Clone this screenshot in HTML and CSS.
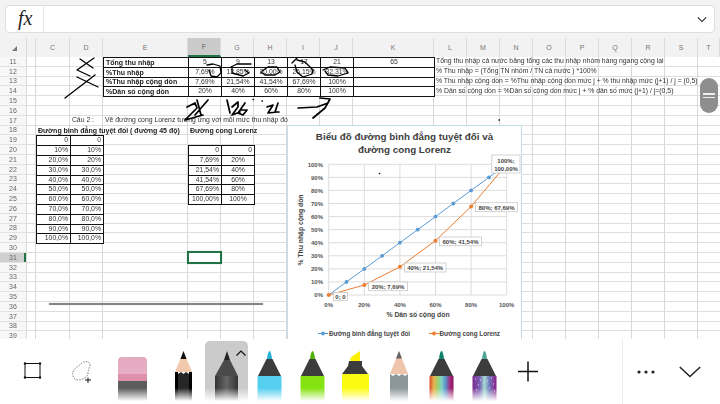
FILE: index.html
```html
<!DOCTYPE html>
<html lang="vi">
<head>
<meta charset="utf-8">
<title>Excel ink</title>
<link rel="stylesheet" href="styles.css">
</head>
<body>
<div class="app">
  <header class="formula">
    <div class="formula-box">
      <span class="fx">fx</span>
      <svg class="fchev" viewBox="0 0 12 8"><path d="M1 1.5 6 6.5 11 1.5"/></svg>
    </div>
  </header>

  <div class="heads">
    <div class="head corner"><svg viewBox="0 0 5 5" class="tri"><path d="M5 0V5H0Z"/></svg></div>
    <div class="head"></div>
    <div class="head">C</div><div class="head">D</div><div class="head">E</div>
    <div class="head sel">F</div><div class="head">G</div><div class="head">H</div><div class="head">I</div><div class="head">J</div>
    <div class="head">K</div><div class="head">L</div><div class="head">M</div><div class="head">N</div><div class="head">O</div>
    <div class="head">P</div><div class="head">Q</div><div class="head">R</div><div class="head">S</div><div class="head">T</div>
  </div>

  <main class="sheet">
    <div class="grid">
      <div class="vl cb"></div><div class="vl cc"></div><div class="vl cd"></div><div class="vl ce"></div>
      <div class="vl cf"></div><div class="vl cg"></div><div class="vl ch"></div><div class="vl ci"></div><div class="vl cj"></div>
      <div class="vl ck"></div><div class="vl cl"></div><div class="vl cm"></div><div class="vl cn"></div><div class="vl co"></div>
      <div class="vl cp"></div><div class="vl cq"></div><div class="vl cr"></div><div class="vl cs"></div>

      <div class="rn">11</div><div class="rn">12</div><div class="rn">13</div><div class="rn">14</div><div class="rn">15</div>
      <div class="rn">16</div><div class="rn">17</div><div class="rn">18</div><div class="rn">19</div><div class="rn">20</div>
      <div class="rn">21</div><div class="rn">22</div><div class="rn">23</div><div class="rn">24</div><div class="rn">25</div>
      <div class="rn">26</div><div class="rn">27</div><div class="rn">28</div><div class="rn">29</div><div class="rn">30</div>
      <div class="rn on">31</div><div class="rn">32</div><div class="rn">33</div><div class="rn">34</div><div class="rn">35</div>
      <div class="rn">36</div><div class="rn">37</div><div class="rn">38</div><div class="rn">39</div>

      <div class="t bold ce r11">Tổng thu nhập</div><div class="t mid cf r11">5</div><div class="t mid cg r11">9</div><div class="t mid ch r11">13</div><div class="t mid ci r11">17</div><div class="t mid cj r11">21</div><div class="t mid ck r11">65</div>
      <div class="t bold ce r12">%Thu nhập</div><div class="t mid cf r12">7,69%</div><div class="t mid cg r12">13,85%</div><div class="t mid ch r12">20,00%</div><div class="t mid ci r12">26,15%</div><div class="t mid cj r12">32,31%</div><div class="t ck r12"></div>
      <div class="t bold ce r13">%Thu nhập cộng dồn</div><div class="t mid cf r13">7,69%</div><div class="t mid cg r13">21,54%</div><div class="t mid ch r13">41,54%</div><div class="t mid ci r13">67,69%</div><div class="t mid cj r13">100%</div><div class="t ck r13"></div>
      <div class="t bold ce r14">%Dân số cộng dồn</div><div class="t mid cf r14">20%</div><div class="t mid cg r14">40%</div><div class="t mid ch r14">60%</div><div class="t mid ci r14">80%</div><div class="t mid cj r14">100%</div><div class="t ck r14"></div>

      <div class="n cl r11">Tổng thu nhập cả nước bằng tổng các thu nhập nhóm hàng ngang cộng lại</div>
      <div class="n cl r12">% Thu nhập  = (Tổng TN nhóm / TN cả nước ) *100%</div>
      <div class="n cl r13">% Thu nhập cộng dồn = %Thu nhập cộng dồn mức j + % thu nhập mức (j+1) / j = (0,5)</div>
      <div class="n cl r14">% Dân số cộng dồn = %Dân số cộng dồn mức j + % dân số mức (j+1) / j=(0,5)</div>

      <div class="n cd r17 rt">Câu 2 :</div>
      <div class="n ce r17">Vẽ đường cong Lorenz tương ứng với mỗi mức thu nhập đó</div>
      <div class="n bold cc r18">Đường bình đẳng tuyệt đối ( đường 45 độ)</div>
      <div class="n bold cf r18">Đường cong Lorenz</div>

      <div class="t end cc r19">0</div><div class="t end cd r19">0</div>
      <div class="t end cc r20">10%</div><div class="t end cd r20">10%</div>
      <div class="t end cc r21">20,0%</div><div class="t end cd r21">20%</div>
      <div class="t end cc r22">30,0%</div><div class="t end cd r22">30,0%</div>
      <div class="t end cc r23">40,0%</div><div class="t end cd r23">40,0%</div>
      <div class="t end cc r24">50,0%</div><div class="t end cd r24">50,0%</div>
      <div class="t end cc r25">60,0%</div><div class="t end cd r25">60,0%</div>
      <div class="t end cc r26">70,0%</div><div class="t end cd r26">70,0%</div>
      <div class="t end cc r27">80,0%</div><div class="t end cd r27">80,0%</div>
      <div class="t end cc r28">90,0%</div><div class="t end cd r28">90,0%</div>
      <div class="t end cc r29">100,0%</div><div class="t end cd r29">100,0%</div>

      <div class="t end cf r20">0</div><div class="t end cg r20">0</div>
      <div class="t end cf r21">7,69%</div><div class="t mid cg r21">20%</div>
      <div class="t end cf r22">21,54%</div><div class="t mid cg r22">40%</div>
      <div class="t end cf r23">41,54%</div><div class="t mid cg r23">60%</div>
      <div class="t end cf r24">67,69%</div><div class="t mid cg r24">80%</div>
      <div class="t end cf r25">100,00%</div><div class="t mid cg r25">100%</div>

      <div class="cursor cf r31"></div>
    </div>

    <svg class="chart" viewBox="287 125 235 214">
      <rect x="287.5" y="125.5" width="234" height="230" fill="#fff" stroke="#c5dcea"/>
      <g class="ch-title">
        <text x="404.500" y="140.300">Biểu đồ đường bình đẳng tuyệt đối và</text>
        <text x="404.500" y="153.300">đường cong Lorenz</text>
      </g>
      <path class="ch-grid" d="M328.7 164.3H506.7M328.7 177.4H506.7M328.7 190.4H506.7M328.7 203.5H506.7M328.7 216.6H506.7M328.7 229.7H506.7M328.7 242.7H506.7M328.7 255.8H506.7M328.7 268.9H506.7M328.7 281.9H506.7M328.7 295H506.7M328.7 164.3V295M364.3 164.3V295M399.9 164.3V295M435.5 164.3V295M471.1 164.3V295M506.7 164.3V295"/>
      <g class="ch-y">
        <text x="323" y="166.500">100%</text><text x="323" y="179.500">90%</text><text x="323" y="192.700">80%</text><text x="323" y="205.700">70%</text><text x="323" y="218.800">60%</text><text x="323" y="231.900">50%</text><text x="323" y="244.900">40%</text><text x="323" y="258">30%</text><text x="323" y="271.100">20%</text><text x="323" y="284.100">10%</text><text x="323" y="297.200">0%</text>
      </g>
      <g class="ch-x">
        <text x="328.7" y="306.500">0%</text><text x="364.3" y="306.500">20%</text><text x="399.9" y="306.500">40%</text><text x="435.5" y="306.500">60%</text><text x="471.1" y="306.500">80%</text><text x="506.7" y="306.500">100%</text>
      </g>
      <text class="ch-ax" x="418" y="316.500">% Dân số cộng dồn</text>
      <text class="ch-ax" transform="translate(303 230) rotate(-90)">% Thu nhập cộng dồn</text>

      <polyline class="ln blue" points="328.7,295 346.5,281.9 364.3,268.9 382.1,255.8 399.9,242.7 417.7,229.7 435.5,216.6 453.3,203.5 471.1,190.4 488.9,177.4 506.7,164.3"/>
      <g class="pt-b">
        <circle cx="346.5" cy="281.9" r="1.9"/><circle cx="364.3" cy="268.9" r="1.9"/><circle cx="382.1" cy="255.8" r="1.9"/><circle cx="399.9" cy="242.7" r="1.9"/><circle cx="417.7" cy="229.7" r="1.9"/><circle cx="435.5" cy="216.6" r="1.9"/><circle cx="453.3" cy="203.5" r="1.9"/><circle cx="471.1" cy="190.4" r="1.9"/><circle cx="488.9" cy="177.4" r="1.9"/>
      </g>
      <polyline class="ln org" points="328.7,295 364.3,285 399.9,266.8 435.5,240.7 471.1,206.5 506.7,164.3"/>
      <g class="pt-o">
        <circle cx="328.7" cy="295" r="2"/><circle cx="364.3" cy="285" r="2"/><circle cx="399.9" cy="266.8" r="2"/><circle cx="435.5" cy="240.7" r="2"/><circle cx="471.1" cy="206.5" r="2"/>
      </g>

      <g class="lbox">
        <rect x="333.5" y="292.5" width="14" height="8"/><rect x="368.5" y="282" width="39" height="8.7"/><rect x="404.5" y="263" width="41.5" height="9"/><rect x="439.5" y="237" width="42" height="8.7"/><rect x="475.5" y="202.7" width="42" height="9"/><rect x="491.8" y="155" width="28.2" height="18"/>
      </g>
      <g class="ltxt">
        <text x="340.5" y="299">0; 0</text><text x="388" y="288.8">20%; 7,69%</text><text x="425.2" y="270">40%; 21,54%</text><text x="460.5" y="243.8">60%; 41,54%</text><text x="496.5" y="209.7">80%; 67,69%</text><text x="506" y="163">100%;</text><text x="506" y="171">100,00%</text>
      </g>

      <circle cx="379.5" cy="173.5" r=".8" fill="#000"/>

      <path class="ln blue" d="M318 333.5H328"/><circle cx="323" cy="333.5" r="1.9" fill="#5b9bd5"/>
      <text class="ch-lg" x="329" y="335.800">Đường bình đẳng tuyệt đối</text>
      <path class="ln org" d="M429 333.5H439"/><circle cx="434" cy="333.5" r="1.9" fill="#ed7d31"/>
      <text class="ch-lg" x="439.500" y="335.800">Đường cong Lorenz</text>
    </svg>

    <svg class="ink" viewBox="0 57 720 282">
      <path d="M94 58 77 70 90 76M80 59 93 68M95 75 65 98M77 77 98 87"/>
      <path d="M207 65 213 64 220 66 221 73 217 77 211 76 209 70"/>
      <path d="M231 67 237 64 251 64M232 67 232 73 243 76 249 73 245 70"/>
      <path d="M262 71 268 67 277 67 280 72 275 75 265 75 261 72"/>
      <path d="M292 63 297 58M297 60 305 62 313 70 312 74 303 77 297 72 295 65"/>
      <path d="M323 70 330 67 345 68 348 73 338 76 328 75 325 71"/>
      <path class="thick" d="M187 107 195 103 197 108 185 120 203 115M197 100 201 115M208 100 195 115"/>
      <path class="thick" d="M227 100 230 113M232 107 238 102 238 107 232 115 240 112M245 103 238 113 243 115 247 110 240 110"/>
      <path d="M253 99.500 253.500 99.500M262 101 262.500 101M499 120 499.500 120"/>
      <path class="thick" d="M267 107 273 105 268 113 277 112M278 103 275 112 279 112"/>
      <path class="thick" d="M298 108 317 107 328 103M320 98 330 99 325 108 313 118"/>
    </svg>

    <div class="stroke"></div>
  </main>

  <div class="thumb"><span></span><span></span></div>

  <footer class="tools">
    <div class="tool t-select">
      <svg viewBox="0 0 43 65"><path class="sel-r" d="M7 24.500H21M7 38.500H21M6 25V38M21 25V38"/><g class="sel-d"><circle cx="6" cy="24.500" r="1.200"/><circle cx="21" cy="24.500" r="1.200"/><circle cx="6" cy="38.500" r="1.200"/><circle cx="21" cy="38.500" r="1.200"/></g></svg>
    </div>
    <div class="tool t-lasso">
      <svg viewBox="0 0 43 65"><path class="lasso" d="M13 33C14 29 19 27 22 24 26 21 31 23 30 27 29 30 28 31 28 34 28 38 23 41 18 41 14 41 12 37 13 33Z"/><path class="plus-s" d="M28 38.500V44M25 41H31"/></svg>
    </div>
    <div class="tool t-eraser">
      <svg viewBox="0 0 43 65">
        <defs><linearGradient id="er" x1="0" y1="0" x2="0" y2="1"><stop offset="0" stop-color="#e4abc0"/><stop offset=".7" stop-color="#e8aec3"/><stop offset=".72" stop-color="#dd8fab"/><stop offset="1" stop-color="#dd8fab"/></linearGradient></defs>
        <path fill="url(#er)" d="M7 42V22Q7 18 11 18H32Q36 18 36 22V42Z"/><rect x="7" y="42" width="29" height="23" fill="#5c5c5c"/>
      </svg>
    </div>
    <div class="tool t-black">
      <svg viewBox="0 0 43 65">
        <path fill="#f2c9ac" d="M21.500 12 30 33H13Z"/><path fill="#111" d="M21.500 12 24.500 20H18.500Z"/>
        <path fill="#262626" d="M13 33 16 35 19 33 21.500 35 24 33 27 35 30 33V65H13Z"/><path fill="#000" d="M13 33H16V65H13ZM27 33H30V65H27Z"/>
      </svg>
    </div>
    <div class="tool t-pen on">
      <svg viewBox="0 0 43 65">
        <defs><linearGradient id="gp" x1="0" y1="0" x2="1" y2="0"><stop offset="0" stop-color="#333"/><stop offset=".5" stop-color="#666"/><stop offset="1" stop-color="#333"/></linearGradient></defs>
        <path fill="#222" d="M22 12 25 21H19Z"/><path fill="#4a4a4a" d="M19 21H25L33 37H10Z"/><rect x="10" y="37" width="23" height="28" fill="url(#gp)"/>
        <path class="caret" d="M31.500 16.500 36 12 40.500 16.500"/>
      </svg>
    </div>
    <div class="tool">
      <svg viewBox="0 0 43 65">
        <path fill="#27b3d6" d="M19 20Q20 12 21.500 12T24 20Z"/><path fill="#3c3c3c" d="M18.500 20H24.500L33 37H10Z"/><rect x="9.500" y="37" width="24" height="28" fill="#55cff0"/>
      </svg>
    </div>
    <div class="tool">
      <svg viewBox="0 0 43 65">
        <path fill="#4fb000" d="M19 20Q20 12 21.500 12T24 20Z"/><path fill="#3c3c3c" d="M18.500 20H24.500L33 37H10Z"/><rect x="9.500" y="37" width="24" height="28" fill="#86e312"/>
      </svg>
    </div>
    <div class="tool">
      <svg viewBox="0 0 43 65">
        <path fill="#fdf000" d="M16.500 20V18.500L26 12V22H16.500Z"/><path fill="#3c3c3c" d="M15 22H28V27L34 35H8L14 27Z"/><rect x="8" y="35" width="27" height="30" fill="#fbfb12"/>
      </svg>
    </div>
    <div class="tool">
      <svg viewBox="0 0 43 65">
        <path fill="#efc5ac" d="M22 12 31 35H13Z"/><path fill="#666" d="M22 12 25 19.500H19Z"/>
        <path fill="#8d9699" d="M13 35 16 37 19 35 22 37 25 35 28 37 31 35V65H13Z"/>
      </svg>
    </div>
    <div class="tool">
      <svg viewBox="0 0 43 65">
        <defs><linearGradient id="rb"><stop offset="0" stop-color="#d9482b"/><stop offset=".18" stop-color="#e8b44c"/><stop offset=".35" stop-color="#9ccf6a"/><stop offset=".5" stop-color="#7fd2c6"/><stop offset=".68" stop-color="#5a8fc9"/><stop offset=".85" stop-color="#a22c7c"/><stop offset="1" stop-color="#8c0f5c"/></linearGradient></defs>
        <path fill="#0b7f6a" d="M19 20Q20 12 21.500 12T24 20Z"/><path fill="#3c3c3c" d="M18.500 20H24.500L33 37H10Z"/><rect x="9.500" y="37" width="24" height="28" fill="url(#rb)"/>
      </svg>
    </div>
    <div class="tool">
      <svg viewBox="0 0 43 65">
        <defs><linearGradient id="gx"><stop offset="0" stop-color="#7b2a8f"/><stop offset=".3" stop-color="#7a5fb4"/><stop offset=".5" stop-color="#a5dcd2"/><stop offset=".7" stop-color="#6f78bd"/><stop offset="1" stop-color="#8a1f86"/></linearGradient></defs>
        <path fill="#4fa596" d="M19 20Q20 12 21.500 12T24 20Z"/><path fill="#3c3c3c" d="M18.500 20H24.500L33 37H10Z"/><rect x="9.500" y="37" width="24" height="28" fill="url(#gx)"/>
        <path class="spark" d="M12 40h1M15 46h1M13 51h1M17 41h1M28 39h1M30 45h1M26 49h1M31 52h1M20 44h1M24 42h1"/>
      </svg>
    </div>
    <div class="tool t-plus">
      <svg viewBox="0 0 44 65"><path class="plus" d="M12 32.500H32M22 22.500V42.500"/></svg>
    </div>
    <div class="actions">
      <svg class="more" viewBox="0 0 20 6"><circle cx="3" cy="3" r="1.600"/><circle cx="10" cy="3" r="1.600"/><circle cx="17" cy="3" r="1.600"/></svg>
      <svg class="hide" viewBox="0 0 22 12"><path d="M.8 1 11 10.500 21.200 1"/></svg>
    </div>
  </footer>
</div>
</body>
</html>
```

FILE: styles.css
```css
* { box-sizing: border-box; }
html, body { margin: 0; padding: 0; background: #fff; }
.app {
  --cols: 27px 9px 34px 33px 85px repeat(5, 33px) 81px repeat(8, 33px) 22px;
  position: relative;
  width: 720px;
  height: 404px;
  overflow: hidden;
  display: flex;
  flex-direction: column;
  font-family: "Liberation Sans", Arial, sans-serif;
}

/* formula bar */
.formula { height: 38px; flex: none; padding: 5px; background: #f3f3f3; }
.formula-box {
  height: 28px;
  display: flex;
  align-items: center;
  justify-content: space-between;
  background: #fff;
  border: 1px solid #dedede;
  border-radius: 4px;
}
.fx {
  width: 38px;
  height: 100%;
  padding-left: 12px;
  border-right: 1px solid #e6e6e6;
  font: italic 20px/24px "Liberation Serif", serif;
  color: #222;
}
.fchev { width: 10px; height: 7px; margin-right: 7px; fill: none; stroke: #222; stroke-width: 1.3; }

/* column headers */
.heads {
  flex: none;
  height: 19px;
  display: grid;
  grid-template-columns: var(--cols);
  background: #f2f2f2;
}
.head {
  display: flex;
  align-items: center;
  justify-content: center;
  border-right: 1px solid #dcdcdc;
  font-size: 7px;
  color: #777;
}
.corner { justify-content: flex-start; align-items: flex-end; padding: 0 0 6px 12px; }
.tri { width: 5px; height: 5px; fill: #777; }
.sel { background: #cacaca; border-bottom: 2px solid #217346; color: #666; }

/* sheet */
.sheet { position: relative; flex: 1; min-height: 0; overflow: hidden; filter: blur(.3px); }
.grid {
  height: 100%;
  display: grid;
  grid-template-columns: var(--cols);
  grid-template-rows: repeat(29, 9.8px);
  align-content: start;
  background: repeating-linear-gradient(to bottom, transparent 0, transparent 8.8px, #dedede 8.8px, #dedede 9.8px);
  font-size: 6.85px;
  color: #333;
}
.vl { grid-row: 1 / -1; border-right: 1px solid #d9d9d9; }
.rn {
  grid-column: 1;
  display: flex;
  align-items: center;
  justify-content: center;
  background: #f7f7f7;
  border-right: 1px solid #d9d9d9;
  border-bottom: 1px solid #e2e2e2;
  font-size: 7px;
  color: #666;
}
.rn.on { background: #cfcfcf; box-shadow: inset -2px 0 0 #217346; }

.cb { grid-column: 2; } .cc { grid-column: 3; } .cd { grid-column: 4; }
.ce { grid-column: 5; } .cf { grid-column: 6; } .cg { grid-column: 7; } .ch { grid-column: 8; }
.ci { grid-column: 9; } .cj { grid-column: 10; } .ck { grid-column: 11; } .cl { grid-column: 12; }
.cm { grid-column: 13; } .cn { grid-column: 14; } .co { grid-column: 15; } .cp { grid-column: 16; }
.cq { grid-column: 17; } .cr { grid-column: 18; } .cs { grid-column: 19; }

.r11 { grid-row: 1; } .r12 { grid-row: 2; } .r13 { grid-row: 3; } .r14 { grid-row: 4; }
.r17 { grid-row: 7; } .r18 { grid-row: 8; } .r19 { grid-row: 9; } .r20 { grid-row: 10; }
.r21 { grid-row: 11; } .r22 { grid-row: 12; } .r23 { grid-row: 13; } .r24 { grid-row: 14; }
.r25 { grid-row: 15; } .r26 { grid-row: 16; } .r27 { grid-row: 17; } .r28 { grid-row: 18; }
.r29 { grid-row: 19; } .r31 { grid-row: 21; }

.t, .n { display: flex; align-items: center; white-space: nowrap; line-height: 1; }
.t {
  margin: 0 -1px -1px 0;
  padding: 0 2px;
  background: #fff;
  border: 1px solid #111;
}
.n { padding-left: 2px; }
.mid { justify-content: center; }
.end { justify-content: flex-end; }
.rt { justify-content: flex-end; padding-right: 9px; }
.bold { font-weight: 700; font-size: 7px; color: #222; }
.cursor { margin: -2px -1px -1px -1px; border: 2px solid #217346; box-shadow: 0 0 1px #9fc4b0; }

/* overlays on the sheet */
.chart { position: absolute; left: 287px; top: 68px; width: 235px; height: 214px; font-family: "Liberation Sans", Arial, sans-serif; }
.ch-title text { font-size: 9.8px; font-weight: 700; fill: #404040; text-anchor: middle; }
.ch-grid { fill: none; stroke: #dcdcdc; stroke-width: 1; }
.ch-y text { font-size: 6px; font-weight: 700; fill: #555; text-anchor: end; }
.ch-x text { font-size: 6px; font-weight: 700; fill: #555; text-anchor: middle; }
.ch-ax { font-size: 6.8px; font-weight: 700; fill: #444; text-anchor: middle; }
.ch-lg { font-size: 6.3px; font-weight: 700; fill: #444; }
.ln { fill: none; stroke-width: 1; }
.blue { stroke: #5b9bd5; }
.org { stroke: #ed7d31; }
.pt-b { fill: #5b9bd5; }
.pt-o { fill: #ed7d31; }
.lbox rect { fill: #fff; stroke: #c8c8c8; stroke-width: .8; }
.ltxt text { font-size: 6px; font-weight: 700; fill: #444; text-anchor: middle; }

.ink { position: absolute; left: 0; top: 0; width: 720px; height: 282px; }
.ink path { fill: none; stroke: #000; stroke-width: 1.300; stroke-linecap: round; stroke-linejoin: round; }
.ink path.thick { stroke-width: 1.700; }
.stroke { position: absolute; left: 49px; top: 246px; width: 214px; height: 2px; background: #858585; box-shadow: 0 0 1px #aaa; }

.thumb {
  position: absolute;
  left: 700px;
  top: 78px;
  width: 18px;
  height: 35px;
  display: flex;
  flex-direction: column;
  align-items: center;
  justify-content: center;
  gap: 2px;
  background: #8e8e8e;
  border-radius: 9px;
}
.thumb span { width: 12px; height: 1.500px; background: #eee; }

/* ink toolbar */
.tools { flex: none; height: 65px; display: flex; background: #fff; position: relative; }
.tool { position: relative; flex: none; width: 43px; height: 65px; }
.tool svg { display: block; width: 100%; height: 65px; }
.tool::after {
  content: "";
  position: absolute;
  left: 0;
  right: 0;
  bottom: 0;
  height: 16px;
  background: linear-gradient(to bottom, rgba(255, 255, 255, 0), #fff 82%);
}
.t-select { margin-left: 19px; }
.t-select::after, .t-lasso::after, .t-plus::after { display: none; }
.t-lasso { margin-left: -2px; }
.t-eraser { margin-left: 8px; }
.t-black { margin-left: 8px; }
.t-pen.on { background: #cbcbcb; border-radius: 5px 5px 0 0; margin-top: 2px; height: 63px; }
.t-pen.on svg { margin-top: -2px; }
.t-plus { width: 44px; }
.sel-r { fill: none; stroke: #111; stroke-width: 1; }
.sel-d { fill: #111; }
.lasso { fill: none; stroke: #666; stroke-width: .8; stroke-dasharray: 1.6 1.2; }
.plus-s { fill: none; stroke: #111; stroke-width: 1; }
.caret { fill: none; stroke: #111; stroke-width: 1.2; }
.plus { fill: none; stroke: #111; stroke-width: 1.500; }
.spark { fill: none; stroke: #e8d8f0; stroke-width: 1; }
.actions {
  margin-left: 72px;
  flex: 1;
  display: flex;
  align-items: center;
  gap: 23px;
  padding-left: 13px;
  border-left: 1px solid #ececec;
}
.more { width: 20px; height: 6px; fill: #222; }
.hide { width: 22px; height: 12px; fill: none; stroke: #222; stroke-width: 1.500; }
```
